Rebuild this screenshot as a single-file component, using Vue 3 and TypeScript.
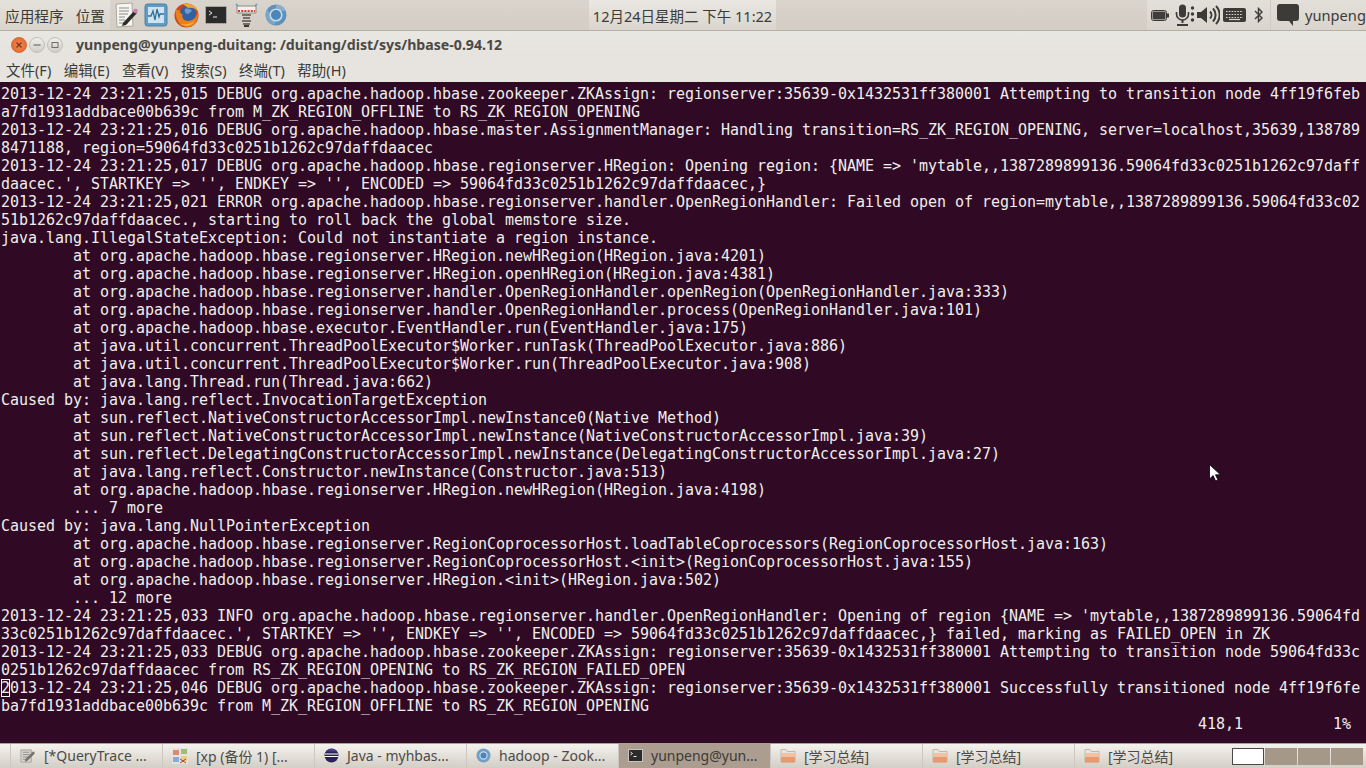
<script setup lang="ts">
const T = '        '
const lines: string[] = [
  '2013-12-24 23:21:25,015 DEBUG org.apache.hadoop.hbase.zookeeper.ZKAssign: regionserver:35639-0x1432531ff380001 Attempting to transition node 4ff19f6feb',
  'a7fd1931addbace00b639c from M_ZK_REGION_OFFLINE to RS_ZK_REGION_OPENING',
  '2013-12-24 23:21:25,016 DEBUG org.apache.hadoop.hbase.master.AssignmentManager: Handling transition=RS_ZK_REGION_OPENING, server=localhost,35639,138789',
  '8471188, region=59064fd33c0251b1262c97daffdaacec',
  "2013-12-24 23:21:25,017 DEBUG org.apache.hadoop.hbase.regionserver.HRegion: Opening region: {NAME => 'mytable,,1387289899136.59064fd33c0251b1262c97daff",
  "daacec.', STARTKEY => '', ENDKEY => '', ENCODED => 59064fd33c0251b1262c97daffdaacec,}",
  '2013-12-24 23:21:25,021 ERROR org.apache.hadoop.hbase.regionserver.handler.OpenRegionHandler: Failed open of region=mytable,,1387289899136.59064fd33c02',
  '51b1262c97daffdaacec., starting to roll back the global memstore size.',
  'java.lang.IllegalStateException: Could not instantiate a region instance.',
  T + 'at org.apache.hadoop.hbase.regionserver.HRegion.newHRegion(HRegion.java:4201)',
  T + 'at org.apache.hadoop.hbase.regionserver.HRegion.openHRegion(HRegion.java:4381)',
  T + 'at org.apache.hadoop.hbase.regionserver.handler.OpenRegionHandler.openRegion(OpenRegionHandler.java:333)',
  T + 'at org.apache.hadoop.hbase.regionserver.handler.OpenRegionHandler.process(OpenRegionHandler.java:101)',
  T + 'at org.apache.hadoop.hbase.executor.EventHandler.run(EventHandler.java:175)',
  T + 'at java.util.concurrent.ThreadPoolExecutor$Worker.runTask(ThreadPoolExecutor.java:886)',
  T + 'at java.util.concurrent.ThreadPoolExecutor$Worker.run(ThreadPoolExecutor.java:908)',
  T + 'at java.lang.Thread.run(Thread.java:662)',
  'Caused by: java.lang.reflect.InvocationTargetException',
  T + 'at sun.reflect.NativeConstructorAccessorImpl.newInstance0(Native Method)',
  T + 'at sun.reflect.NativeConstructorAccessorImpl.newInstance(NativeConstructorAccessorImpl.java:39)',
  T + 'at sun.reflect.DelegatingConstructorAccessorImpl.newInstance(DelegatingConstructorAccessorImpl.java:27)',
  T + 'at java.lang.reflect.Constructor.newInstance(Constructor.java:513)',
  T + 'at org.apache.hadoop.hbase.regionserver.HRegion.newHRegion(HRegion.java:4198)',
  T + '... 7 more',
  'Caused by: java.lang.NullPointerException',
  T + 'at org.apache.hadoop.hbase.regionserver.RegionCoprocessorHost.loadTableCoprocessors(RegionCoprocessorHost.java:163)',
  T + 'at org.apache.hadoop.hbase.regionserver.RegionCoprocessorHost.<init>(RegionCoprocessorHost.java:155)',
  T + 'at org.apache.hadoop.hbase.regionserver.HRegion.<init>(HRegion.java:502)',
  T + '... 12 more',
  "2013-12-24 23:21:25,033 INFO org.apache.hadoop.hbase.regionserver.handler.OpenRegionHandler: Opening of region {NAME => 'mytable,,1387289899136.59064fd",
  "33c0251b1262c97daffdaacec.', STARTKEY => '', ENDKEY => '', ENCODED => 59064fd33c0251b1262c97daffdaacec,} failed, marking as FAILED_OPEN in ZK",
  '2013-12-24 23:21:25,033 DEBUG org.apache.hadoop.hbase.zookeeper.ZKAssign: regionserver:35639-0x1432531ff380001 Attempting to transition node 59064fd33c',
  '0251b1262c97daffdaacec from RS_ZK_REGION_OPENING to RS_ZK_REGION_FAILED_OPEN',
]
const cursorLine = '013-12-24 23:21:25,046 DEBUG org.apache.hadoop.hbase.zookeeper.ZKAssign: regionserver:35639-0x1432531ff380001 Successfully transitioned node 4ff19f6fe'
const lastLine = 'ba7fd1931addbace00b639c from M_ZK_REGION_OFFLINE to RS_ZK_REGION_OPENING'
const menus = ['文件(F)', '编辑(E)', '查看(V)', '搜索(S)', '终端(T)', '帮助(H)']
const tasks = [
  { label: '[*QueryTrace ...', icon: 'edit' },
  { label: '[xp (备份 1) [...', icon: 'xp' },
  { label: 'Java - myhbas...', icon: 'eclipse' },
  { label: 'hadoop - Zook...', icon: 'chrome' },
  { label: 'yunpeng@yun...', icon: 'term', active: true },
  { label: '[学习总结]', icon: 'folder' },
  { label: '[学习总结]', icon: 'folder' },
  { label: '[学习总结]', icon: 'folder' },
]
</script>

<template>
  <div class="screen">
    <header class="panel">
      <nav class="panel-left">
        <span class="panel-menu">应用程序</span>
        <span class="panel-menu">位置</span>
      </nav>
      <div class="launchers">
        <svg width="24" height="26" viewBox="0 0 24 26">
          <path d="M2 2 L18 1 L19 24 L3 25Z" fill="#f6f5f0" stroke="#aaa79f" />
          <path d="M5 6h10M5 9h10M5 12h9M5 15h6M5 18h6M5 21h9" stroke="#8b8a86" stroke-width="1" />
          <path d="M9 21 L20 9 L23 11 L12 23 L8 24Z" fill="#2e2a26" />
          <circle cx="21.5" cy="9" r="2.2" fill="#c77fb0" />
        </svg>
        <svg width="24" height="24" viewBox="0 0 24 24">
          <rect x="1" y="1" width="22" height="22" rx="2.5" fill="#5f9cc6" stroke="#4a80a8" />
          <rect x="4" y="4" width="16" height="16" fill="#cfe2ee" />
          <path d="M4 13h3l2-5 2 9 2-11 2 8 1-3h4" fill="none" stroke="#2f6f9c" stroke-width="1.3" />
        </svg>
        <svg width="25" height="25" viewBox="0 0 25 25">
          <circle cx="12.5" cy="12.5" r="12" fill="#c9461a" />
          <circle cx="14" cy="10.5" r="8" fill="#34609f" />
          <path d="M11 6c3-1 6 0 7 2-2 1-3 3-5 3-2-1-3-3-2-5Z" fill="#6f9ac9" />
          <path d="M2 6 C0 15 6 24.5 14 24 C21 23.5 25 16 24 9 C23 14 19 18 14 18 C10 18 7.5 15 8.5 11 C7 11 5.5 9.5 5.5 6.5 C4.5 7.5 3 7.5 2 6Z" fill="#ec7f1d" />
          <path d="M6 21c5 3 12 2 15-3-4 3-10 4-15 3Z" fill="#f6b636" />
          <path d="M9 1.5 C14 -.5 21 2 24 8 C21 5 17 4 14 5 C13 4 11 2.5 9 1.5Z" fill="#f2a52c" />
        </svg>
        <svg width="22" height="18" viewBox="0 0 22 18">
          <rect x="0.5" y="0.5" width="21" height="17" rx="1" fill="#2b2b2b" stroke="#a9a69f" />
          <path d="M4 5l3 2-3 2" fill="none" stroke="#e8e8e8" />
          <path d="M8 11h4" stroke="#e8e8e8" />
        </svg>
        <svg width="23" height="25" viewBox="0 0 23 25">
          <path d="M1 1l2 2M22 1l-2 2" stroke="#5d93b3" stroke-width="1.5" />
          <path d="M2 3h19v7H2z" fill="#f2f0ec" stroke="#8c8a84" />
          <path d="M3 8h17" stroke="#d33a3a" stroke-width="2" stroke-dasharray="2 1.2" />
          <path d="M7 12h9M8 15h7M7 18h9M8 21h7" stroke="#55524d" stroke-width="1.6" />
          <path d="M9 23h5" stroke="#3b3935" stroke-width="2" />
        </svg>
        <svg width="22" height="22" viewBox="0 0 22 22">
          <circle cx="11" cy="11" r="10.5" fill="#5d92bd" />
          <path d="M11 .5A10.5 10.5 0 0 1 20.5 7H11Z" fill="#86aece" />
          <path d="M2 5.5A10.5 10.5 0 0 0 9 21L12 16 6 10Z" fill="#7aa5c8" />
          <circle cx="11" cy="11" r="5.8" fill="#4c86b8" stroke="#c7d9e7" stroke-width="1.6" />
        </svg>
      </div>
      <div class="clock">12月24日星期二 下午 11:22</div>
      <div class="tray">
        <svg class="i-batt" width="18" height="11" viewBox="0 0 18 11">
          <rect x="0.5" y="0.5" width="15" height="10" rx="2" fill="#f0eee9" stroke="#3a3835" />
          <rect x="1.5" y="1.5" width="13" height="8" rx="1" fill="#3f3d3a" />
          <rect x="16" y="3.5" width="2" height="4" fill="#3a3835" />
        </svg>
        <svg class="i-mic" width="20" height="22" viewBox="0 0 20 22">
          <rect x="4" y="0.5" width="7" height="13" rx="3.5" fill="#3c3b37" />
          <path d="M1.5 8v2a6 6 0 0 0 12 0V8" fill="none" stroke="#3c3b37" stroke-width="1.6" />
          <path d="M7.5 16v3M2 21h11" stroke="#3c3b37" stroke-width="2" />
          <circle cx="17.5" cy="4" r="1.7" fill="#3c3b37" />
          <circle cx="17.5" cy="10" r="1.7" fill="#3c3b37" />
          <circle cx="17.5" cy="16" r="1.7" fill="#3c3b37" />
        </svg>
        <svg class="i-vol" width="23" height="20" viewBox="0 0 23 20">
          <path d="M0 7h4l6-5v16l-6-5H0Z" fill="#3c3b37" />
          <path d="M13 6.5a5 5 0 0 1 0 7M16 3.5a9.5 9.5 0 0 1 0 13M19 1a13 13 0 0 1 0 18" fill="none" stroke="#3c3b37" stroke-width="2" />
        </svg>
        <svg class="i-kbd" width="23" height="14" viewBox="0 0 23 14">
          <rect width="23" height="14" rx="2" fill="#3c3b37" />
          <path d="M3 3.5h17M3 6.5h17M3 9.5h17" stroke="#d8d4cc" stroke-width="1.2" stroke-dasharray="1.6 1.2" />
          <path d="M6 11.5h11" stroke="#d8d4cc" stroke-width="1.2" />
        </svg>
        <svg class="i-bt" width="9" height="16" viewBox="0 0 9 16">
          <path d="M1 4l7 7-3.5 3.5v-13L8 5l-7 7" fill="none" stroke="#3c3b37" stroke-width="1.4" />
        </svg>
        <span class="tray-sep"></span>
        <svg class="i-chat" width="22" height="22" viewBox="0 0 22 22">
          <path d="M3 0h16a3 3 0 0 1 3 3v11a3 3 0 0 1-3 3h-3v5l-4-5H3a3 3 0 0 1-3-3V3a3 3 0 0 1 3-3Z" fill="#3c3b37" />
        </svg>
        <span class="user">yunpeng</span>
      </div>
    </header>

    <div class="titlebar">
      <div class="win-btns">
        <span class="win-btn close"><svg width="8" height="8" viewBox="0 0 8 8"><path d="M1.5 1.5l5 5M6.5 1.5l-5 5" stroke="#7a3413" stroke-width="1.2" /></svg></span>
        <span class="win-btn"><svg width="8" height="8" viewBox="0 0 8 8"><path d="M0.5 4h7" stroke="#6f6d68" stroke-width="1.2" /></svg></span>
        <span class="win-btn"><svg width="8" height="8" viewBox="0 0 8 8"><rect x="1" y="1.5" width="6" height="5" fill="none" stroke="#6f6d68" /></svg></span>
      </div>
      <span class="title">yunpeng@yunpeng-duitang: /duitang/dist/sys/hbase-0.94.12</span>
    </div>

    <div class="menubar">
      <span v-for="m in menus" :key="m" class="menu-item">{{ m }}</span>
    </div>

    <main class="terminal">
      <div v-for="(l, i) in lines" :key="i" class="row">{{ l }}</div>
      <div class="row"><span class="cursor">2</span>{{ cursorLine }}</div>
      <div class="row">{{ lastLine }}</div>
      <div class="row status"><span class="ruler">418,1</span><span>1%</span></div>
      <svg class="pointer" width="12" height="18" viewBox="0 0 12 18">
        <path d="M0.5 0.5V15l3.6-3.4L6.6 17l2.4-1-2.5-5.2h5Z" fill="#fff" stroke="#000" stroke-width="0.8" />
      </svg>
    </main>

    <footer class="taskbar">
      <div class="tasks">
        <div v-for="(t, i) in tasks" :key="i" class="task" :class="{ active: t.active }">
          <svg v-if="t.icon === 'edit'" class="ti" width="16" height="16" viewBox="0 0 17 16">
            <path d="M1 1.5h11v13H1z" fill="#d9d6d0" stroke="#a5a29b" />
            <path d="M3 4h7M3 6.5h7M3 9h5M3 11.5h5" stroke="#8f8c86" />
            <path d="M6 11l8-8 2 2-8 8-3 1Z" fill="#77746e" />
          </svg>
          <svg v-else-if="t.icon === 'xp'" class="ti" width="16" height="16" viewBox="0 0 16 16">
            <rect width="16" height="16" fill="#e6e3dc" />
            <path d="M1 2h6v5H1z" fill="#e08a6c" /><path d="M9 1h6v5H9z" fill="#9cc07c" />
            <path d="M1 9h6v5H1z" fill="#86abd6" /><path d="M9 8h6v5H9z" fill="#e9cf82" />
            <path d="M8 11l6 4M14 11l-6 4" stroke="#b33a2a" />
          </svg>
          <svg v-else-if="t.icon === 'eclipse'" class="ti" width="15" height="15" viewBox="0 0 15 15">
            <circle cx="7.5" cy="7.5" r="7" fill="#2c2255" />
            <path d="M1 6h13M.5 8.5h14" stroke="#fff" stroke-width="1" />
            <path d="M2 3.5A7 7 0 0 1 13 3.5Z" fill="#4a3f8c" />
          </svg>
          <svg v-else-if="t.icon === 'chrome'" class="ti" width="15" height="15" viewBox="0 0 15 15">
            <circle cx="7.5" cy="7.5" r="7" fill="#6f9fc8" />
            <circle cx="7.5" cy="7.5" r="3.6" fill="#4c86b8" stroke="#c7d9e7" stroke-width="1.2" />
          </svg>
          <svg v-else-if="t.icon === 'term'" class="ti" width="15" height="13" viewBox="0 0 15 13">
            <rect x="0.5" y="0.5" width="14" height="12" fill="#2b2b2b" stroke="#c9c5bd" />
            <path d="M2.5 3l2 1.5-2 1.5" fill="none" stroke="#eee" />
            <path d="M5.5 7.5h3" stroke="#eee" />
          </svg>
          <svg v-else class="ti" width="16" height="15" viewBox="0 0 16 15">
            <path d="M1 1.5h5l1.5 2H15V14H1Z" fill="#e9e5de" stroke="#bdb8af" />
            <path d="M1 5h14v9.5H1Z" fill="#e59a72" />
            <path d="M1 5h14v4H1Z" fill="#f0c2a4" />
          </svg>
          <span class="task-label">{{ t.label }}</span>
        </div>
      </div>
      <div class="switcher">
        <span class="ws current"></span>
        <span class="ws"></span>
        <span class="ws"></span>
        <span class="ws"></span>
      </div>
    </footer>
  </div>
</template>

<style scoped>
.screen {
  width: 1366px;
  height: 768px;
  display: flex;
  flex-direction: column;
  overflow: hidden;
  font-family: "Noto Sans", "Noto Sans CJK SC", sans-serif;
  color: #3c3b37;
}
.panel {
  flex: none;
  display: flex;
  align-items: stretch;
  background: linear-gradient(#d9d4cc, #d3cdc4);
  border-bottom: 1px solid #b5aea3;
  box-sizing: border-box;
  height: 31px;
}
.panel-left {
  width: 110px;
  display: flex;
  gap: 12px;
  align-items: center;
  padding-left: 5px;
  box-sizing: border-box;
  background: linear-gradient(#e5e2dc, #d9d5cd);
}
.panel-menu { font-size: 14.67px; }
.launchers {
  display: grid;
  grid-template-columns: repeat(6, 30px);
  justify-items: center;
  align-items: center;
  padding-left: 1px;
  width: 479px;
  box-sizing: border-box;
}
.clock {
  width: 187px;
  display: flex;
  align-items: center;
  justify-content: center;
  font-size: 14.5px;
  white-space: nowrap;
  background: linear-gradient(#ebe8e3, #d9d5ce);
}
.tray {
  margin-left: auto;
  width: 219px;
  box-sizing: border-box;
  display: flex;
  align-items: center;
  padding-left: 4px;
  background: linear-gradient(#e3dfd9, #d9d5ce);
}
.i-mic { margin-left: 6px; }
.i-vol { margin-left: 2px; }
.i-kbd { margin-left: 3px; }
.i-bt { margin-left: 8px; }
.tray-sep { width: 1px; height: 30px; margin-left: 7px; background: #cfcac2; }
.i-chat { margin-left: 6px; }
.user { font-size: 14.67px; margin-left: 6px; }
.titlebar {
  height: 27px;
  flex: none;
  display: flex;
  align-items: center;
  background: linear-gradient(#e9e7e2, #e6e3de);
}
.win-btns { display: flex; gap: 2px; padding-left: 11px; width: 76px; box-sizing: border-box; }
.win-btn {
  width: 16px;
  height: 16px;
  box-sizing: border-box;
  border-radius: 50%;
  display: flex;
  align-items: center;
  justify-content: center;
  background: linear-gradient(#f0eeea, #d0cdc6);
  border: 1px solid #c2bfb8;
}
.win-btn.close { background: radial-gradient(#f08a52, #e2602a); border-color: #d9662f; }
.title { font-weight: 700; font-size: 14.15px; color: #4a4945; }
.menubar {
  height: 24px;
  flex: none;
  display: flex;
  align-items: center;
  gap: 12.5px;
  padding: 0 0 2px 6px;
  box-sizing: border-box;
  background: #e7e4df;
}
.menu-item { font-size: 14.5px; color: #3c3b37; }
.terminal {
  flex: 1;
  position: relative;
  background: #300a24;
  color: #eeeeec;
  font-family: "DejaVu Sans Mono", monospace;
  font-size: 15px;
  letter-spacing: -0.03px;
  line-height: 18px;
  padding: 3px 0 0 1px;
  overflow: hidden;
}
.row { height: 18px; white-space: pre; }
.cursor { outline: 1px solid #fff; outline-offset: -1px; }
.status { display: flex; padding-left: 1197px; }
.ruler { width: 135px; }
.pointer { position: absolute; left: 1209px; top: 382px; }
.taskbar {
  height: 25px;
  flex: none;
  display: flex;
  background: linear-gradient(#f4f2ee, #d3cec6);
  border-top: 1px solid #a89f92;
  box-sizing: border-box;
  padding-left: 10px;
}
.tasks { display: grid; grid-template-columns: repeat(8, 152px); }
.task {
  display: flex;
  align-items: center;
  gap: 8px;
  padding: 0 0 1px 9px;
  font-size: 14px;
  color: #4c4b47;
  border-left: 1px solid #cdc8bf;
  box-sizing: border-box;
  overflow: hidden;
  white-space: nowrap;
}
.task.active { background: #ab9d8f; color: #3c3b37; }
.ti { flex: none; }
.switcher { display: flex; gap: 1px; padding-left: 6px; align-items: center; }
.ws { width: 32px; height: 17px; background: #a59888; box-sizing: border-box; }
.ws.current { background: #fff; border: 1px solid #4a4945; }
</style>
